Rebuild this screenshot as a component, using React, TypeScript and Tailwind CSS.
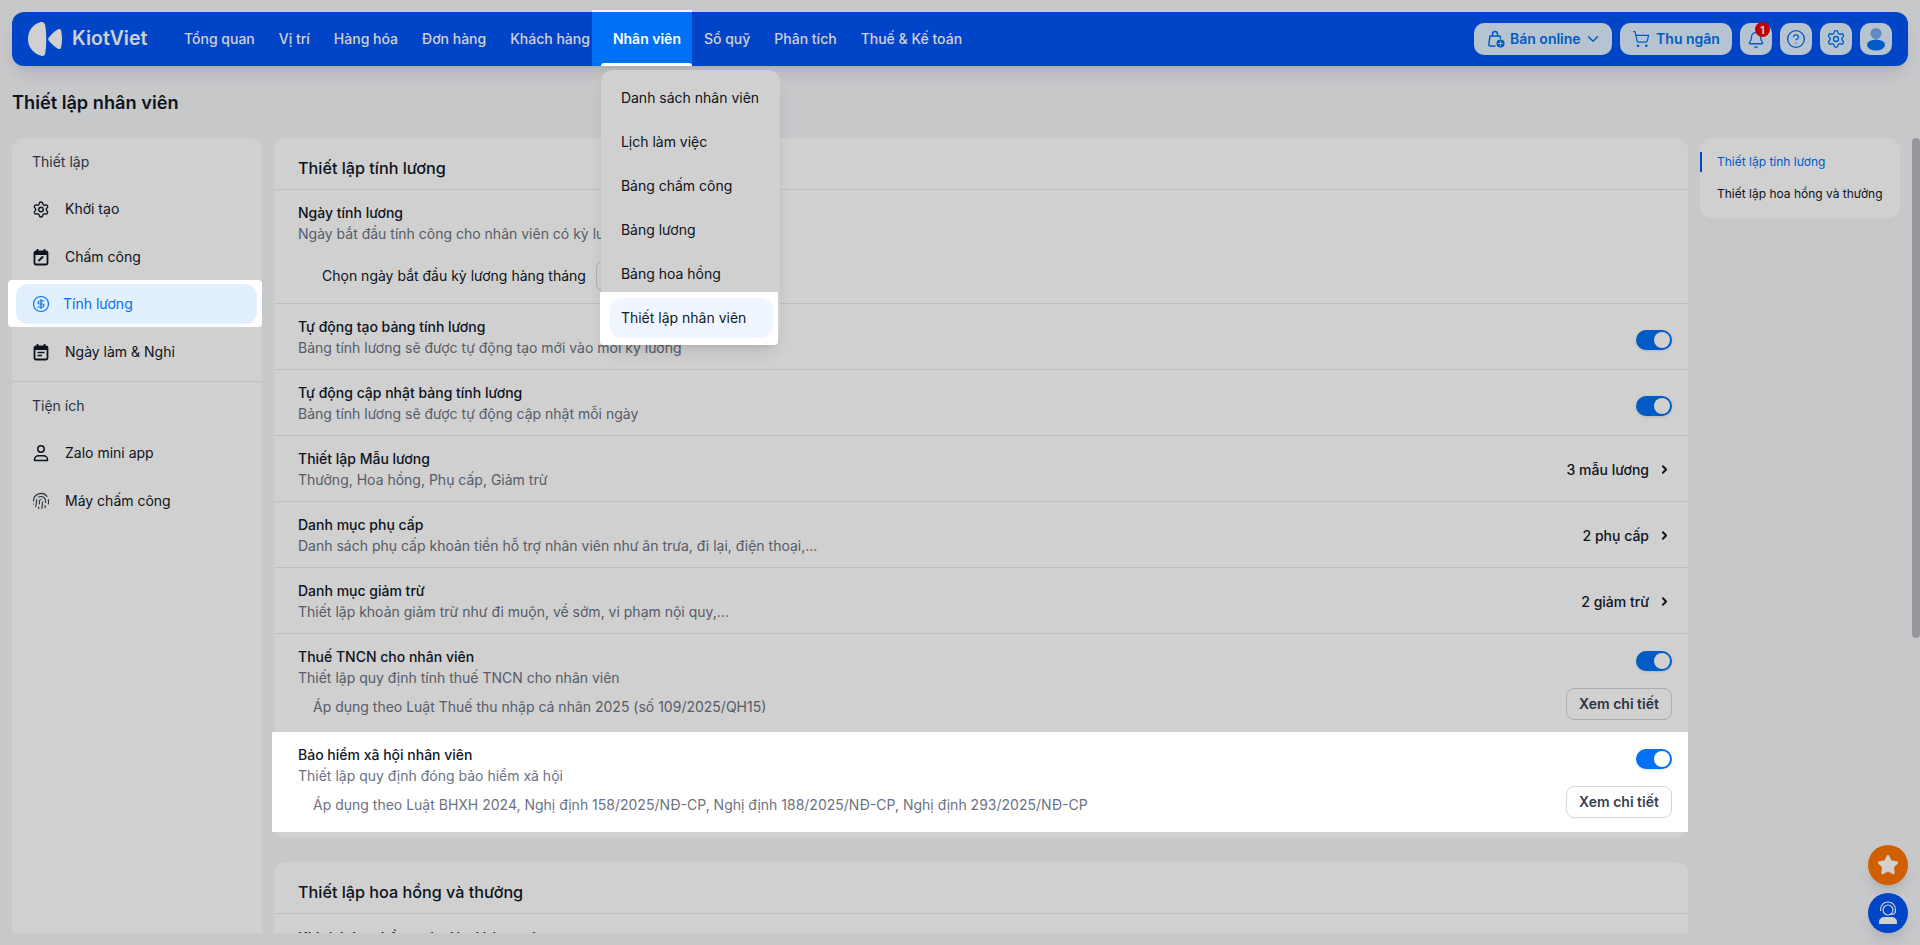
import React from 'react';
import {
  Bell,
  ChevronDown,
  ChevronRight,
  CircleDollarSign,
  CircleHelp,
  Fingerprint,
  Settings,
  ShoppingCart,
  Star,
} from 'lucide-react';

const NAV_BEFORE = ['Tổng quan', 'Vị trí', 'Hàng hóa', 'Đơn hàng', 'Khách hàng'];
const NAV_AFTER = ['Sổ quỹ', 'Phân tích', 'Thuế & Kế toán'];
const STAFF_MENU = ['Danh sách nhân viên', 'Lịch làm việc', 'Bảng chấm công', 'Bảng lương', 'Bảng hoa hồng'];

const Logo = () => (
  <svg width="34" height="34" viewBox="0 0 34 34" fill="#ffffff">
    <path d="M12 0.3C5 2 0 9 0 17c0 8 5 14.5 13 16.7 2.500.7 3.800-.3 4.200-2 1.400-9 1.400-20 0-28.500C16.800 1 15 -.5 12 .3z" />
    <path d="M29.500 7.600C26 9.800 23 12.800 20.800 15.600c-.8 1-.8 2.100 0 3.100 2.200 2.800 5.200 5.500 8.700 7.700 1.800 1 3.100.6 3.600-1 1.200-5 1.200-11.500 0-16.800-.5-1.600-1.800-2-3.600-1z" />
  </svg>
);

const BagGlobeIcon = () => (
  <svg width="20" height="20" viewBox="0 0 20 20" fill="none" stroke="#0070f4" strokeWidth="1.500">
    <path d="M4 7h10l.6 2M4 7l-1.200 8.500A1.500 1.500 0 0 0 4.300 17H9" strokeLinecap="round" strokeLinejoin="round" />
    <path d="M6.500 7V5a2.500 2.500 0 0 1 5 0v2" strokeLinecap="round" />
    <circle cx="14.500" cy="14.500" r="4" fill="#0070f4" stroke="none" />
    <path d="M12 14.500h5M14.500 12v5" stroke="#dff0ff" strokeWidth="0.800" />
  </svg>
);

const CalendarEditIcon = () => (
  <svg width="18" height="18" viewBox="0 0 18 18" fill="none" stroke="#111827" strokeWidth="1.800">
    <rect x="2.500" y="3.500" width="13" height="13" rx="1.500" />
    <path d="M2.500 5.500h13" strokeWidth="3" />
    <path d="M5.500 1v3M12.500 1v3" />
    <path d="M7 12.500l3.500-3.500" strokeLinecap="round" strokeWidth="2" />
  </svg>
);

const CalendarNoteIcon = () => (
  <svg width="18" height="18" viewBox="0 0 18 18" fill="none" stroke="#111827" strokeWidth="1.800">
    <rect x="2.500" y="3.500" width="13" height="13" rx="1.500" />
    <path d="M2.500 5.500h13" strokeWidth="3" />
    <path d="M5.500 1v3M12.500 1v3" />
    <path d="M5.500 9.500h7M5.500 12.500h4.500" strokeWidth="1.500" />
  </svg>
);

const UserIcon = () => (
  <svg width="18" height="18" viewBox="0 0 18 18" fill="none" stroke="#111827" strokeWidth="1.500">
    <circle cx="9" cy="5" r="3.200" />
    <path d="M2.500 16.500v-.8c0-2.400 2-4 4-4h5c2 0 4 1.600 4 4v.8z" strokeLinejoin="round" />
  </svg>
);

const AvatarIcon = () => (
  <svg width="24" height="24" viewBox="0 0 24 24">
    <circle cx="12" cy="6.500" r="5.500" fill="#78a9ee" />
    <ellipse cx="12" cy="18" rx="9" ry="5.500" fill="#0070f4" />
  </svg>
);

const HeadsetAgentIcon = () => (
  <svg width="22" height="24" viewBox="0 0 22 24" fill="none" stroke="#ffffff">
    <circle cx="11" cy="9" r="5" strokeWidth="1.200" />
    <path d="M3.500 10V8.500a7.500 7.500 0 0 1 15 0V10" strokeWidth="1.200" />
    <path d="M18.500 10c0 2-1.500 3.500-4.500 3.500" strokeWidth="1.200" />
    <path d="M2 23v-2c0-3 2.500-5 5.500-5h7c3 0 5.500 2 5.500 5v2z" fill="#ffffff" stroke="none" />
  </svg>
);

const Toggle = ({ offset }: { offset: string }) => (
  <span className={`flex h-5 w-9 shrink-0 items-center justify-end rounded-full bg-[#0070f4] pr-[2px] shadow-sm ${offset}`}>
    <span className="h-4 w-4 rounded-full bg-white" />
  </span>
);

const DetailButton = () => (
  <button className="h-8 w-[106px] rounded-lg border border-[#d5d7de] bg-transparent text-sm font-semibold text-[#374151]">
    Xem chi tiết
  </button>
);

const RowText = ({ title, desc }: { title: string; desc: string }) => (
  <div>
    <div className="text-sm leading-5 font-medium text-[#111827]">{title}</div>
    <div className="mt-px text-sm leading-5 text-[#6b7280]">{desc}</div>
  </div>
);

const ToggleRow = ({ title, desc }: { title: string; desc: string }) => (
  <div className="flex h-[66px] justify-between border-b border-[#e8e8ef] pt-[13px] pr-4 pl-6">
    <RowText title={title} desc={desc} />
    <Toggle offset="mt-[13px]" />
  </div>
);

const LinkRow = ({ title, desc, value }: { title: string; desc: string; value: string }) => (
  <div className="flex h-[66px] items-center justify-between border-b border-[#e8e8ef] pt-[2px] pr-[17px] pl-6">
    <RowText title={title} desc={desc} />
    <div className="flex items-center gap-[9px] text-sm font-medium text-[#111827]">
      {value}
      <ChevronRight size={13} strokeWidth={3.500} />
    </div>
  </div>
);

const LawRow = ({ title, desc, note }: { title: string; desc: string; note: string }) => (
  <div className="flex justify-between pt-[13px] pr-4 pb-3 pl-6">
    <div>
      <RowText title={title} desc={desc} />
      <div className="mt-[9px] pl-[15px] text-sm leading-5 text-[#6b7280]">{note}</div>
    </div>
    <div className="flex flex-col items-end gap-[17px] pt-1">
      <Toggle offset="" />
      <DetailButton />
    </div>
  </div>
);

const SideItem = ({ icon, label }: { icon: React.ReactNode; label: string }) => (
  <div className="flex h-10 items-center gap-[15px] pl-4 text-sm text-[#111827]">
    <span className="flex w-[18px] justify-center">{icon}</span>
    {label}
  </div>
);

export default function App() {
  return (
    <div className="relative h-[945px] w-[1920px] overflow-hidden bg-[#f4f5f8] font-['Inter',sans-serif]">
      <div className="px-3 pt-3">
        <header className="flex h-[54px] items-center justify-between rounded-xl bg-[#0054f4] pr-4 pl-4 shadow-lg">
          <div className="flex items-center">
            <Logo />
            <span className="ml-[10px] w-[74px] text-[19.500px] leading-none font-semibold whitespace-nowrap text-white">KiotViet</span>
            <nav className="ml-[26px] flex h-[54px] items-center text-sm font-medium text-white">
              {NAV_BEFORE.map((item) => (
                <a key={item} className="px-3">{item}</a>
              ))}
              {/* wrapper stays without z-index so the dropdown falls under the overlay */}
              <div className="relative h-[54px]">
                <a className="relative z-50 -mt-[2px] -ml-[10px] flex h-[56px] items-center border-t-2 border-[#f4f5f8] bg-[#0070f4] pr-[11px] pl-[21px] font-semibold text-white">
                  Nhân viên
                  <span className="absolute right-0 bottom-0 left-[9px] h-[3px] rounded-t-sm bg-white" />
                </a>
                <div className="absolute top-[58px] -left-[1px] w-[179px] rounded-xl bg-white pt-2 pr-[7px] pb-[7px] pl-[9px] font-normal text-[#111827] shadow-lg">
                  {STAFF_MENU.map((item) => (
                    <div key={item} className="mb-1 flex h-10 items-center pl-[11px]">{item}</div>
                  ))}
                  <div className="relative z-50 -mt-[6px] -mr-[5px] -mb-[7px] -ml-[10px] rounded-b-sm bg-white pt-[6px] pr-[5px] pb-[7px] pl-[10px]">
                    <div className="flex h-10 items-center rounded-xl bg-[#f0f6ff] pl-[11px] text-[#111827]">Thiết lập nhân viên</div>
                  </div>
                </div>
              </div>
              {NAV_AFTER.map((item) => (
                <a key={item} className="px-3">{item}</a>
              ))}
            </nav>
          </div>
          <div className="flex items-center gap-2 text-sm font-semibold text-[#0070f4]">
            <button className="flex h-8 w-[138px] items-center gap-1 rounded-[10px] bg-[#dff0ff] pl-3">
              <BagGlobeIcon />
              Bán online
              <ChevronDown size={18} className="-ml-[1px]" />
            </button>
            <button className="flex h-8 w-[112px] items-center justify-center gap-[6px] rounded-[10px] bg-[#dff0ff]">
              <ShoppingCart size={18} strokeWidth={1.600} />
              Thu ngân
            </button>
            <button className="relative flex h-8 w-8 items-center justify-center rounded-[10px] bg-[#dff0ff]">
              <Bell size={18} strokeWidth={1.700} className="mt-[2px]" />
              <span className="absolute -top-[1px] right-[2px] flex h-[15px] w-[15px] items-center justify-center rounded-full bg-[#f00000] text-[10px] leading-none font-bold text-white">1</span>
            </button>
            <button className="flex h-8 w-8 items-center justify-center rounded-[10px] bg-[#dff0ff]">
              <CircleHelp size={20} strokeWidth={1.600} />
            </button>
            <button className="flex h-8 w-8 items-center justify-center rounded-[10px] bg-[#dff0ff]">
              <Settings size={20} strokeWidth={1.600} />
            </button>
            <button className="flex h-8 w-8 items-center justify-center rounded-[10px] bg-[#dff0ff]">
              <AvatarIcon />
            </button>
          </div>
        </header>
      </div>

      <h1 className="flex h-[72px] items-center pt-[2px] pl-3 text-[18.200px] font-semibold text-[#111827]">Thiết lập nhân viên</h1>

      <div className="flex h-[795px] items-start gap-3 overflow-hidden pr-5 pl-3">
        <aside className="h-[795px] w-[250px] shrink-0 rounded-t-xl bg-white">
          <div className="pt-[14px] pb-[17px] pl-5 text-sm leading-5 text-[#374151]">Thiết lập</div>
          <div className="flex flex-col gap-2 pl-1">
            <SideItem icon={<Settings size={21} strokeWidth={1.800} />} label="Khởi tạo" />
            <SideItem icon={<CalendarEditIcon />} label="Chấm công" />
            <div className="relative z-50 -mt-[5px] -mb-[3px] -ml-2 rounded-sm bg-white pt-1 pr-[5px] pb-[3px] pl-2">
              <div className="flex h-10 items-center gap-[13px] rounded-xl bg-[#e1effe] pl-4 text-sm text-[#0070f4]">
                <span className="flex w-[18px] justify-center"><CircleDollarSign size={18} strokeWidth={1.600} /></span>
                Tính lương
              </div>
            </div>
            <SideItem icon={<CalendarNoteIcon />} label="Ngày làm & Nghỉ" />
          </div>
          <div className="mt-[9px] border-t border-[#e8e8ef]" />
          <div className="pt-[14px] pb-[17px] pl-5 text-sm leading-5 text-[#374151]">Tiện ích</div>
          <div className="flex flex-col gap-2 pl-1">
            <SideItem icon={<UserIcon />} label="Zalo mini app" />
            <SideItem icon={<Fingerprint size={20} strokeWidth={1.500} className="text-[#374151]" />} label="Máy chấm công" />
          </div>
        </aside>

        <main className="w-[1414px] shrink-0">
          <section className="rounded-xl bg-white pb-[6px]">
            <div className="flex h-[52px] items-center border-b border-[#e8e8ef] pt-[10px] pl-6 text-[16.200px] font-medium text-[#111827]">Thiết lập tính lương</div>
            <div className="h-[114px] border-b border-[#e8e8ef] pt-[13px] pl-6">
              <RowText title="Ngày tính lương" desc="Ngày bắt đầu tính công cho nhân viên có kỳ lương hàng tháng" />
              <div className="mt-4 flex items-center gap-[10px] pl-6 text-sm text-[#111827]">
                <span>Chọn ngày bắt đầu kỳ lương hàng tháng</span>
                <div className="h-8 w-[150px] rounded-lg border border-[#d5d7de]" />
              </div>
            </div>
            <ToggleRow title="Tự động tạo bảng tính lương" desc="Bảng tính lương sẽ được tự động tạo mới vào mỗi kỳ lương" />
            <ToggleRow title="Tự động cập nhật bảng tính lương" desc="Bảng tính lương sẽ được tự động cập nhật mỗi ngày" />
            <LinkRow title="Thiết lập Mẫu lương" desc="Thưởng, Hoa hồng, Phụ cấp, Giảm trừ" value="3 mẫu lương" />
            <LinkRow title="Danh mục phụ cấp" desc="Danh sách phụ cấp khoản tiền hỗ trợ nhân viên như ăn trưa, đi lại, điện thoại,..." value="2 phụ cấp" />
            <LinkRow title="Danh mục giảm trừ" desc="Thiết lập khoản giảm trừ như đi muộn, về sớm, vi phạm nội quy,..." value="2 giảm trừ" />
            <div className="h-[98px]">
              <LawRow
                title="Thuế TNCN cho nhân viên"
                desc="Thiết lập quy định tính thuế TNCN cho nhân viên"
                note="Áp dụng theo Luật Thuế thu nhập cá nhân 2025 (số 109/2025/QH15)"
              />
            </div>
            <div className="relative z-50 -ml-[2px] h-[100px] bg-white pl-[2px]">
              <LawRow
                title="Bảo hiểm xã hội nhân viên"
                desc="Thiết lập quy định đóng bảo hiểm xã hội"
                note="Áp dụng theo Luật BHXH 2024, Nghị định 158/2025/NĐ-CP, Nghị định 188/2025/NĐ-CP, Nghị định 293/2025/NĐ-CP"
              />
            </div>
          </section>

          <section className="mt-6 rounded-t-xl bg-white">
            <div className="flex h-[52px] items-center border-b border-[#e8e8ef] pt-[10px] pl-6 text-[16.200px] font-medium text-[#111827]">Thiết lập hoa hồng và thưởng</div>
            <div className="pt-[14px] pl-6 text-sm leading-5 font-medium text-[#111827]">Khi tính hoa hồng trừ giá trị hàng trả</div>
          </section>
        </main>

        <div className="h-20 w-[200px] shrink-0 rounded-xl bg-white pt-[14px] text-xs">
          <div className="flex h-[20px] items-center border-l-2 border-[#0054f4] pl-[15px] text-[#0070f4]">Thiết lập tính lương</div>
          <div className="mt-3 flex h-[20px] items-center pl-[17px] text-[#111827]">Thiết lập hoa hồng và thưởng</div>
        </div>
      </div>

      <div className="absolute top-[138px] right-0 h-[500px] w-2 rounded-full bg-[#b7bac0]" />

      <div className="absolute right-3 bottom-3 flex flex-col gap-2">
        <button className="flex h-10 w-10 items-center justify-center rounded-full bg-[#ff7500] shadow-lg">
          <Star size={22} fill="#ffffff" stroke="#ffffff" />
        </button>
        <button className="flex h-10 w-10 items-center justify-center rounded-full bg-[#0054f4] shadow-lg">
          <HeadsetAgentIcon />
        </button>
      </div>

      {/* tour overlay: highlighted parts sit above it on z-50 */}
      <div className="fixed inset-0 z-40 bg-black/[0.184]" />
    </div>
  );
}
